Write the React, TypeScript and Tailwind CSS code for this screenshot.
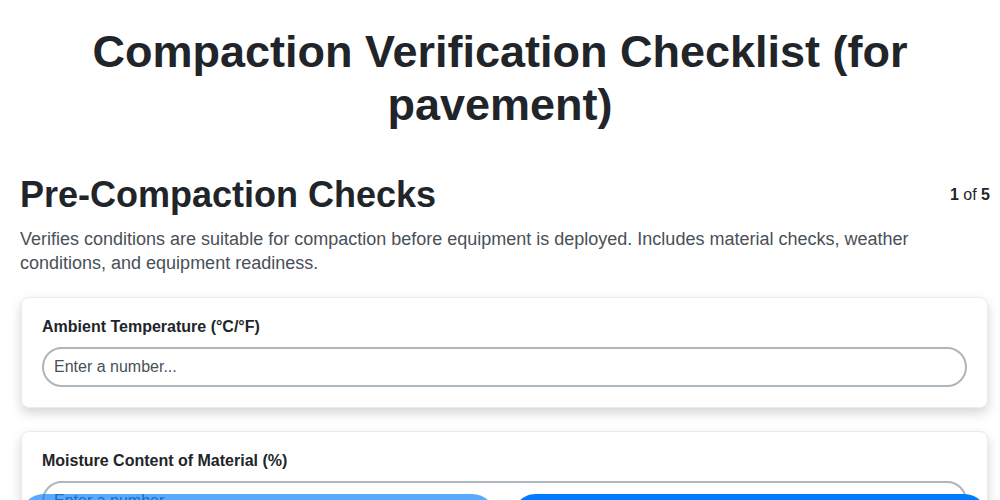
import React from "react";

const fields = [
  { label: "Ambient Temperature (°C/°F)" },
  { label: "Moisture Content of Material (%)" },
  { label: "Material Temperature at Placement (°C/°F)" },
];

export default function App() {
  return (
    <div className="min-h-screen bg-white font-['Liberation_Sans',Arial,sans-serif] text-[#212529]">
      <h1 className="px-5 pt-[25px] text-center text-[45px] font-bold leading-[53px]">
        Compaction Verification Checklist (for pavement)
      </h1>
      <div className="pl-5 pr-[10px] pt-[42px] pb-24">
        <div className="flex items-start justify-between">
          <h2 className="text-[36px] font-bold leading-[1.2]">Pre-Compaction Checks</h2>
          <div className="pt-[10px] text-base leading-6">
            <span className="font-bold">1</span> of <span className="font-bold">5</span>
          </div>
        </div>
        <p className="mt-[11px] text-[18px] leading-6 text-[#495057]">
          Verifies conditions are suitable for compaction before equipment is deployed. Includes material checks,
          weather conditions, and equipment readiness.
        </p>
        <div className="mt-[22px] flex flex-col gap-[23px] pl-px pr-[2px]">
          {fields.map((f) => (
            <div
              key={f.label}
              className="rounded-lg border border-[#e9ecef] bg-white p-5 shadow-[0_5px_12px_rgba(0,0,0,0.17)]"
            >
              <label className="mb-[11px] block text-base font-bold leading-[18px]">{f.label}</label>
              <input
                type="text"
                placeholder="Enter a number..."
                className="h-10 w-full rounded-full border-2 border-[#adb5bd] px-[10px] text-base text-[#212529] outline-none placeholder:text-[#495057]"
              />
            </div>
          ))}
        </div>
      </div>
      <div className="fixed bottom-[-42px] left-5 right-[12px] flex gap-4">
        <button className="h-12 flex-1 rounded-full bg-[#007bff] text-base font-bold text-white opacity-65">
          Previous
        </button>
        <button className="h-12 flex-1 rounded-full bg-[#007bff] text-base font-bold text-white">Next</button>
      </div>
    </div>
  );
}
